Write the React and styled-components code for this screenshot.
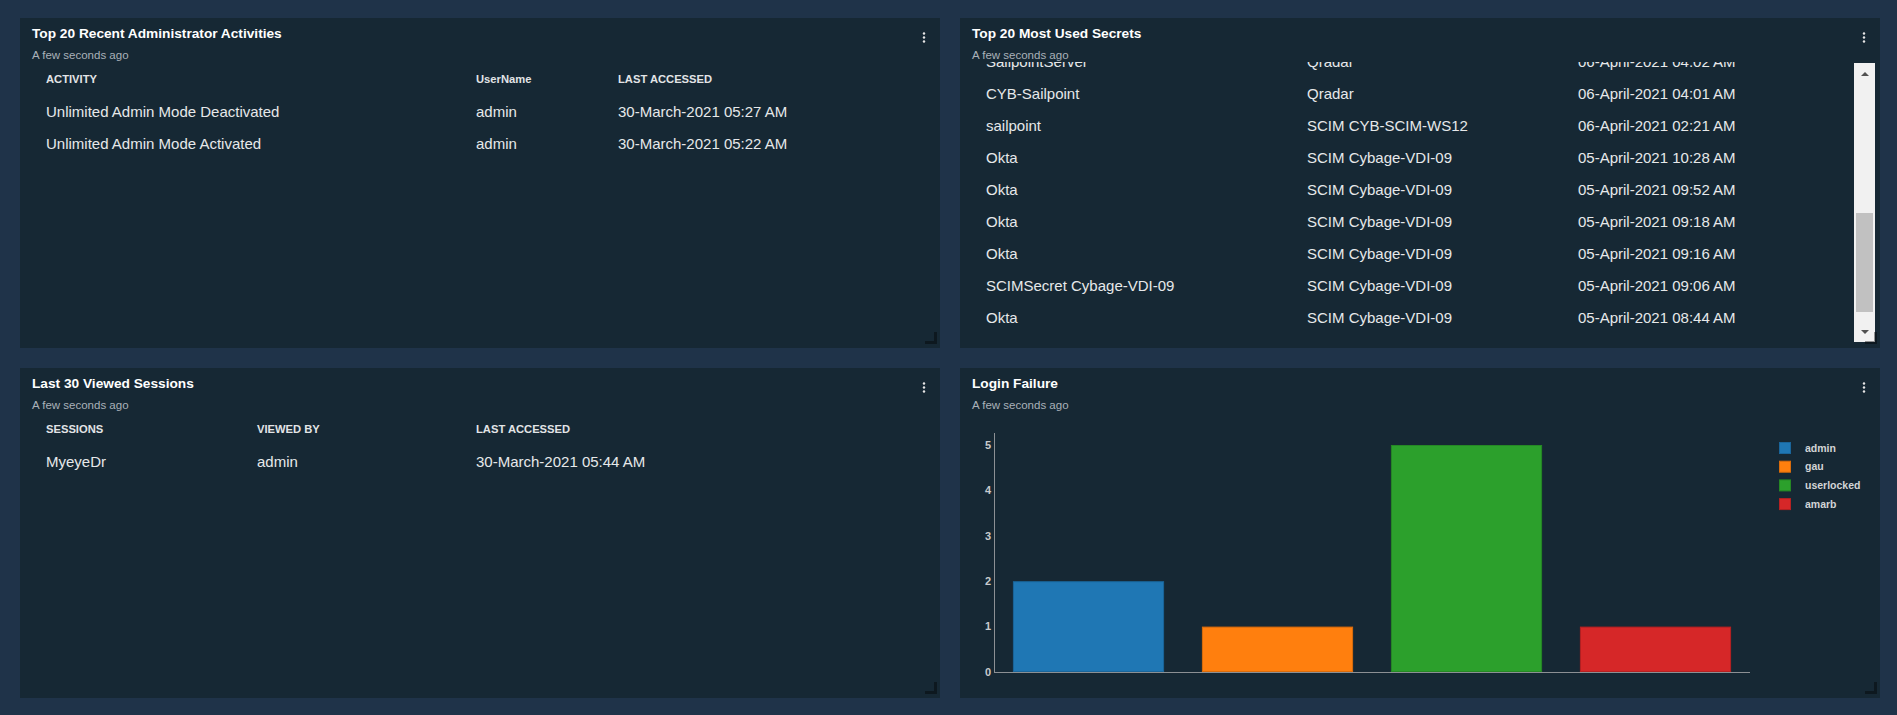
import { useLayoutEffect, useRef } from 'react'
import styled, { createGlobalStyle } from 'styled-components'

const GlobalStyle = createGlobalStyle`
  html, body {
    margin: 0;
    padding: 0;
    background: #1f3349;
  }
  body {
    font-family: "Liberation Sans", Arial, sans-serif;
  }
  * { box-sizing: border-box; }
`

const Dashboard = styled.div`
  display: grid;
  grid-template-columns: 1fr 1fr;
  grid-template-rows: 330px 330px;
  gap: 20px;
  padding: 18px 17px 17px 20px;
  height: 715px;
  background: #1f3349;
`

const Panel = styled.section`
  position: relative;
  display: flex;
  flex-direction: column;
  background: #162834;
  overflow: hidden;

  /* grid resize handle */
  &::after {
    content: '';
    position: absolute;
    right: 3px;
    bottom: 4px;
    width: 9px;
    height: 9px;
    border-right: 3px solid rgba(0, 0, 0, 0.4);
    border-bottom: 3px solid rgba(0, 0, 0, 0.4);
    z-index: 2;
  }
`

const PanelHeader = styled.header`
  flex: none;
  display: flex;
  justify-content: space-between;
  align-items: flex-start;
  height: 44px;
  padding: 8px 12px 0 12px;
`

const Title = styled.h2`
  margin: 0;
  font-size: 13.7px;
  line-height: 16px;
  font-weight: 700;
  color: #ffffff;
`

const Subtitle = styled.div`
  margin-top: 6px;
  font-size: 11.5px;
  line-height: 14px;
  color: #a9b1b9;
`

const Kebab = styled.button`
  margin-top: 6px;
  padding: 0;
  width: 8px;
  height: 11px;
  border: 0;
  background: none;
  display: flex;
  justify-content: center;
  cursor: pointer;
`

const Table = styled.div`
  padding-top: 1px;
`

const Row = styled.div`
  display: grid;
  grid-template-columns: ${p => p.$cols};
  align-items: center;
  height: 32px;
  padding: 0 26px;
`

const HeadCell = styled.div`
  font-size: 11.2px;
  font-weight: 700;
  color: #e2e4e6;
  white-space: nowrap;
`

const Cell = styled.div`
  font-size: 15px;
  color: #e6e8ea;
  white-space: nowrap;
`

const ScrollBody = styled.div`
  flex: 1;
  display: flex;
  min-height: 0;
`

const ScrollList = styled.div`
  flex: 1;
  overflow: hidden;
`

const ListInner = styled.div`
  padding-bottom: 16px;
`

const Track = styled.div`
  flex: none;
  width: 21px;
  margin: 1px 5px 6px 0;
  display: flex;
  flex-direction: column;
  background: #f1f1f1;
`

const ArrowBtn = styled.div`
  flex: none;
  height: 21px;
  display: flex;
  align-items: center;
  justify-content: center;

  &::before {
    content: '';
    border-left: 4px solid transparent;
    border-right: 4px solid transparent;
    ${p => (p.$down ? 'border-top' : 'border-bottom')}: 4px solid #505050;
  }
`

const Gap = styled.div`
  flex: none;
  height: ${p => p.$size}px;
`

const Thumb = styled.div`
  flex: none;
  height: ${p => p.$size}px;
  margin: 0 2px;
  background: #c1c1c1;
`

const ChartArea = styled.div`
  flex: 1;
  min-height: 0;
`

const KebabIcon = () => (
  <svg width="4" height="11" viewBox="0 0 4 11">
    <circle cx="2" cy="1.5" r="1.2" fill="#e8e8e8" />
    <circle cx="2" cy="5.5" r="1.2" fill="#e8e8e8" />
    <circle cx="2" cy="9.5" r="1.2" fill="#e8e8e8" />
  </svg>
)

const Header = ({ title }) => (
  <PanelHeader>
    <div>
      <Title>{title}</Title>
      <Subtitle>A few seconds ago</Subtitle>
    </div>
    <Kebab aria-label="menu">
      <KebabIcon />
    </Kebab>
  </PanelHeader>
)

const DataTable = ({ cols, head, rows }) => (
  <Table>
    <Row $cols={cols}>
      {head.map(h => <HeadCell key={h}>{h}</HeadCell>)}
    </Row>
    {rows.map((r, i) => (
      <Row $cols={cols} key={i}>
        {r.map((c, j) => <Cell key={j}>{c}</Cell>)}
      </Row>
    ))}
  </Table>
)

const activities = [
  ['Unlimited Admin Mode Deactivated', 'admin', '30-March-2021 05:27 AM'],
  ['Unlimited Admin Mode Activated', 'admin', '30-March-2021 05:22 AM'],
]

const sessions = [['MyeyeDr', 'admin', '30-March-2021 05:44 AM']]

const secrets = [
  ['Qradar Secret', 'Qradar', '07-April-2021 11:12 AM'],
  ['Okta', 'SCIM Cybage-VDI-09', '07-April-2021 10:48 AM'],
  ['sailpoint', 'SCIM CYB-SCIM-WS12', '07-April-2021 09:30 AM'],
  ['CYB-Sailpoint', 'Qradar', '07-April-2021 08:15 AM'],
  ['Okta', 'SCIM Cybage-VDI-09', '07-April-2021 06:41 AM'],
  ['SCIMSecret Cybage-VDI-09', 'SCIM Cybage-VDI-09', '06-April-2021 11:58 PM'],
  ['Okta', 'SCIM Cybage-VDI-09', '06-April-2021 10:20 PM'],
  ['SailpointServer', 'Qradar', '06-April-2021 08:07 PM'],
  ['sailpoint', 'SCIM CYB-SCIM-WS12', '06-April-2021 03:35 PM'],
  ['Okta', 'SCIM Cybage-VDI-09', '06-April-2021 11:02 AM'],
  ['CYB-Sailpoint', 'Qradar', '06-April-2021 07:44 AM'],
  ['SailpointServer', 'Qradar', '06-April-2021 04:02 AM'],
  ['CYB-Sailpoint', 'Qradar', '06-April-2021 04:01 AM'],
  ['sailpoint', 'SCIM CYB-SCIM-WS12', '06-April-2021 02:21 AM'],
  ['Okta', 'SCIM Cybage-VDI-09', '05-April-2021 10:28 AM'],
  ['Okta', 'SCIM Cybage-VDI-09', '05-April-2021 09:52 AM'],
  ['Okta', 'SCIM Cybage-VDI-09', '05-April-2021 09:18 AM'],
  ['Okta', 'SCIM Cybage-VDI-09', '05-April-2021 09:16 AM'],
  ['SCIMSecret Cybage-VDI-09', 'SCIM Cybage-VDI-09', '05-April-2021 09:06 AM'],
  ['Okta', 'SCIM Cybage-VDI-09', '05-April-2021 08:44 AM'],
]

const SCROLL_TOP = 402

const SecretsList = () => {
  const ref = useRef(null)
  useLayoutEffect(() => {
    if (ref.current) ref.current.scrollTop = SCROLL_TOP
  }, [])
  return (
    <ScrollBody>
      <ScrollList ref={ref}>
        <ListInner>
          <DataTable
            cols="321px 271px 1fr"
            head={['SECRET NAME', 'FOLDER', 'LAST ACCESSED']}
            rows={secrets}
          />
        </ListInner>
      </ScrollList>
      <Track>
        <ArrowBtn />
        <Gap $size={129} />
        <Thumb $size={99} />
        <Gap $size={9} />
        <ArrowBtn $down />
      </Track>
    </ScrollBody>
  )
}

const failures = [
  { name: 'admin', value: 2, color: '#1f77b4', edge: '#1a659a' },
  { name: 'gau', value: 1, color: '#ff7f0e', edge: '#d96c0c' },
  { name: 'userlocked', value: 5, color: '#2ca02c', edge: '#258825' },
  { name: 'amarb', value: 1, color: '#d62728', edge: '#b62122' },
]

const LoginChart = () => {
  const x0 = 34
  const x1 = 790
  const base = 260
  const top = 21
  const unit = 45.4
  const band = (x1 - x0) / failures.length
  const y = v => base - v * unit
  return (
    <ChartArea>
      <svg width="920" height="286" viewBox="0 0 920 286">
        {[0, 1, 2, 3, 4, 5].map(t => (
          <text
            key={t}
            x="31"
            y={y(t)}
            dy="0.35em"
            textAnchor="end"
            fontFamily="Liberation Sans, Arial, sans-serif"
            fontSize="11"
            fontWeight="700"
            fill="#c9cbcd"
          >
            {t}
          </text>
        ))}
        {failures.map((d, i) => (
          <rect
            key={d.name}
            x={x0 + band * i + band * 0.1 + 0.5}
            y={y(d.value) + 0.5}
            width={band * 0.8 - 1}
            height={d.value * unit - 1}
            fill={d.color}
            stroke={d.edge}
            strokeWidth="1"
          />
        ))}
        <line x1={x0 + 0.5} y1={top} x2={x0 + 0.5} y2={base} stroke="#8c9094" strokeWidth="1" />
        <line x1={x0} y1={base + 0.5} x2={x1} y2={base + 0.5} stroke="#8c9094" strokeWidth="1" />
        {failures.map((d, i) => {
          const cy = 36 + i * 18.7
          return (
            <g key={d.name}>
              <rect x="819.5" y={cy - 5.5} width="11" height="11" fill={d.color} stroke={d.edge} />
              <text
                x="845"
                y={cy}
                dy="0.35em"
                fontFamily="Liberation Sans, Arial, sans-serif"
                fontSize="10.5"
                fontWeight="700"
                fill="#d2d4d6"
              >
                {d.name}
              </text>
            </g>
          )
        })}
      </svg>
    </ChartArea>
  )
}

export default function App() {
  return (
    <>
      <GlobalStyle />
      <Dashboard>
        <Panel>
          <Header title="Top 20 Recent Administrator Activities" />
          <DataTable
            cols="430px 142px 1fr"
            head={['ACTIVITY', 'UserName', 'LAST ACCESSED']}
            rows={activities}
          />
        </Panel>
        <Panel>
          <Header title="Top 20 Most Used Secrets" />
          <SecretsList />
        </Panel>
        <Panel>
          <Header title="Last 30 Viewed Sessions" />
          <DataTable
            cols="211px 219px 1fr"
            head={['SESSIONS', 'VIEWED BY', 'LAST ACCESSED']}
            rows={sessions}
          />
        </Panel>
        <Panel>
          <Header title="Login Failure" />
          <LoginChart />
        </Panel>
      </Dashboard>
    </>
  )
}
